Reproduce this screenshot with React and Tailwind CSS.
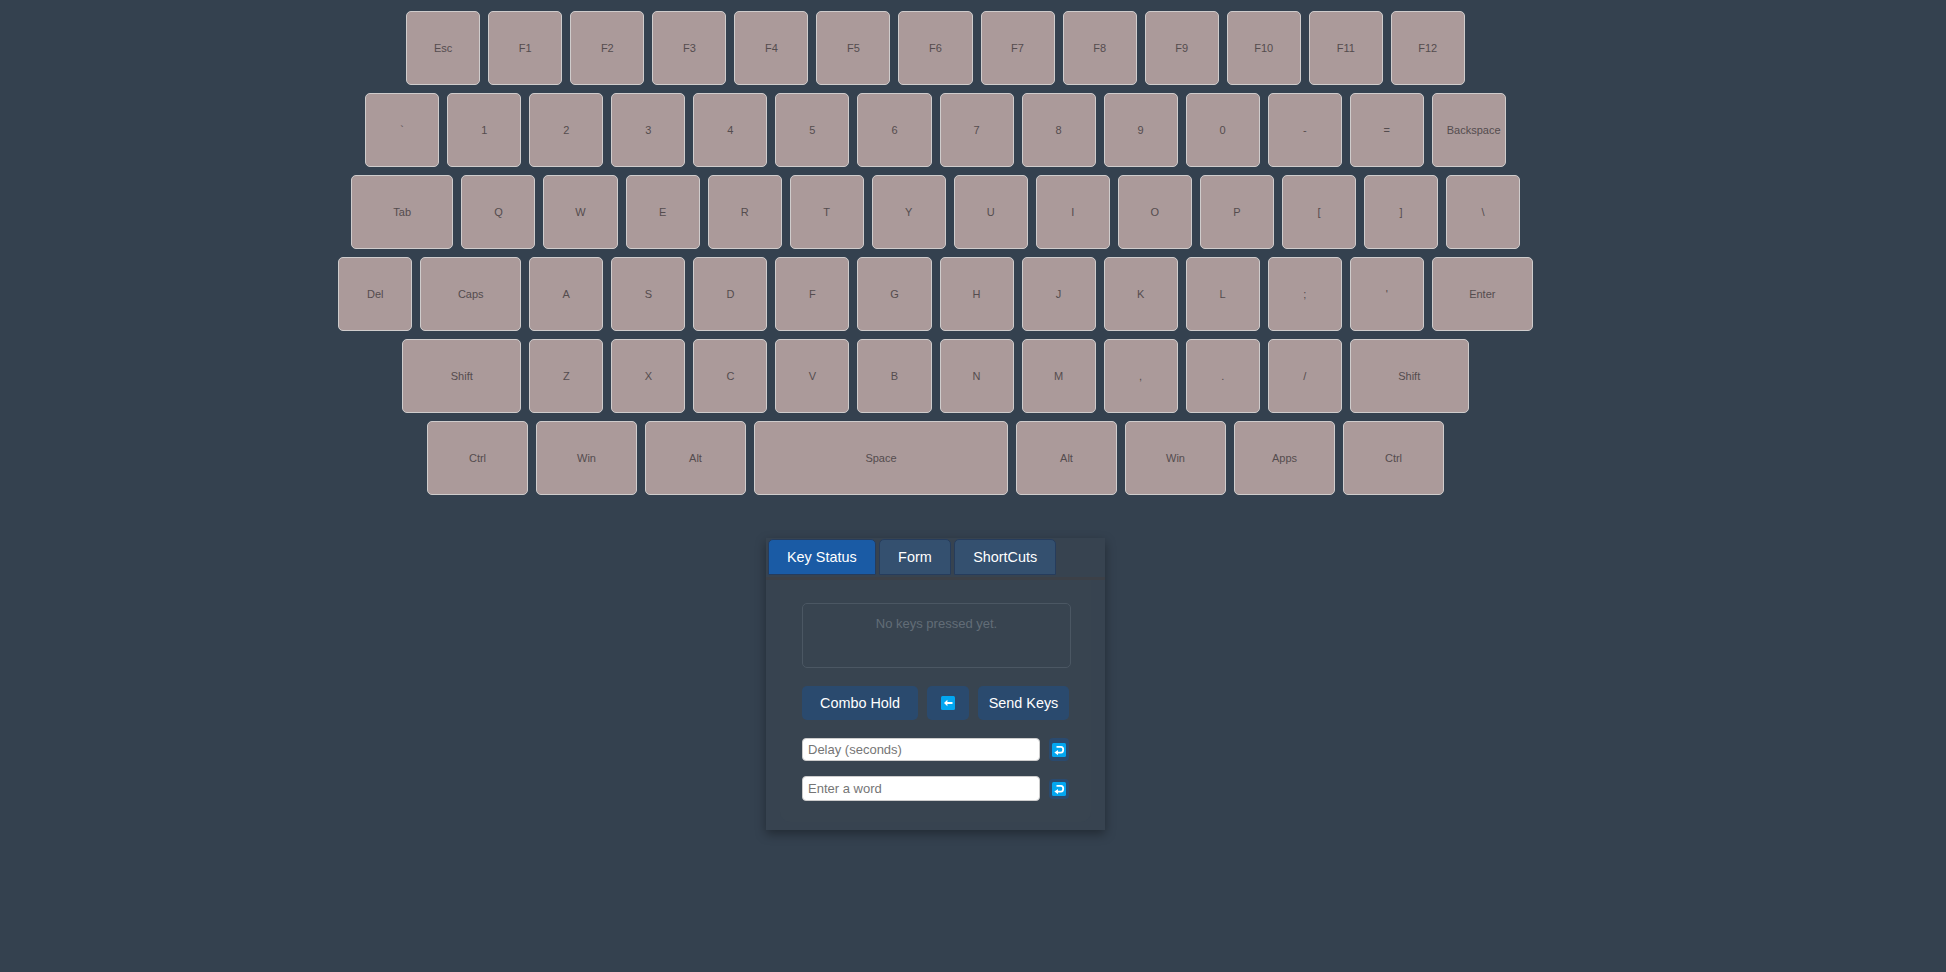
import { useState } from 'react';

// key sizes: s = normal, m = caps/enter/ctrl etc, t = tab, l = shift, x = space
const sizes = {
    s: 'w-[74.05px]',
    m: 'w-[101px]',
    t: 'w-[102.5px]',
    l: 'w-[119px]',
    x: 'w-[254px]',
};

const k = (list) => list.split(' ').map((label) => ({ label, size: 's' }));
const w = (label, size = 'm') => ({ label, size });

const rows = [
    k('Esc F1 F2 F3 F4 F5 F6 F7 F8 F9 F10 F11 F12'),
    k('` 1 2 3 4 5 6 7 8 9 0 - = Backspace'),
    [w('Tab', 't'), ...k('Q W E R T Y U I O P [ ] \\')],
    [w('Del', 's'), w('Caps'), ...k("A S D F G H J K L ; '"), w('Enter')],
    [w('Shift', 'l'), ...k('Z X C V B N M , . /'), w('Shift', 'l')],
    [w('Ctrl'), w('Win'), w('Alt'), w('Space', 'x'), w('Alt'), w('Win'), w('Apps'), w('Ctrl')],
];

function BackIcon() {
    return (
        <svg width="14" height="14" viewBox="0 0 14 14" className="block">
            <rect width="14" height="14" rx="1.5" fill="#03a6f0" />
            <path d="M3 7 L6.4 3.8 V6 H11.5 V8 H6.4 V10.2 Z" fill="#fff" />
        </svg>
    );
}

function ReturnIcon() {
    return (
        <svg width="14" height="14" viewBox="0 0 14 14" className="block">
            <rect width="14" height="14" rx="1.5" fill="#03a6f0" />
            <path d="M4.5 3.8 H9 Q11.2 3.8 11.2 6.5 Q11.2 9.6 9 9.6 H5.5" fill="none" stroke="#fff" strokeWidth="1.8" />
            <path d="M2.4 9.6 L6 6.9 V12.3 Z" fill="#fff" />
        </svg>
    );
}

function Keyboard() {
    return (
        <div className="flex flex-col gap-2 pt-[11px]">
            {rows.map((row, i) => (
                <div key={i} className="flex justify-center gap-2">
                    {row.map((key, j) => (
                        <button
                            key={j}
                            className={`${sizes[key.size]} h-[74px] shrink-0 px-[14px] text-center text-[11px] text-[#544c4e] bg-[#ab9a9a] border border-[#cfcccc] rounded-[5px]`}
                        >
                            {key.label}
                        </button>
                    ))}
                </div>
            ))}
        </div>
    );
}

function Panel() {
    const [tab, setTab] = useState('Key Status');

    return (
        <div className="w-[339px] h-[292px] mt-[43px] mx-auto bg-[#374350] shadow-[0_4px_10px_rgba(0,0,0,0.35)]">
            <div className="flex gap-[3.5px] pl-[2px] pt-[1px] h-[38px] border-b-[3px] border-[#3c4047] box-content">
                {['Key Status', 'Form', 'ShortCuts'].map((name) => (
                    <button
                        key={name}
                        onClick={() => setTab(name)}
                        className={`h-[36px] px-[18px] pt-[1px] text-[14.4px] text-white border border-[#263c5c] rounded-t-[5px] ${tab === name ? 'bg-[#1a5ba5]' : 'bg-[#34506f]'}`}
                    >
                        {name}
                    </button>
                ))}
            </div>
            <div className="mx-[14px] h-[242px] rounded-b-[10px] bg-[#384450] px-[22px] pt-[23px]">
                <div className="w-[269px] h-[65px] border border-[#4b5763] rounded-[5px] pt-[10px] text-center text-[13px] text-[#626d77]">
                    No keys pressed yet.
                </div>
                <div className="flex gap-[9px] mt-[18px]">
                    <button className="w-[116px] h-[34px] pt-[1px] text-[14.4px] text-white bg-[#2a4a6e] rounded-[5px]">Combo Hold</button>
                    <button className="w-[42px] h-[34px] flex items-center justify-center bg-[#2a4a6e] rounded-[5px]"><BackIcon /></button>
                    <button className="w-[91px] h-[34px] pt-[1px] text-[14.4px] text-white bg-[#2a4a6e] rounded-[5px]">Send Keys</button>
                </div>
                <div className="flex items-center gap-[9px] mt-[18px]">
                    <input placeholder="Delay (seconds)" className="w-[238px] h-[23px] px-[5px] text-[13px] text-black bg-white border border-[#ccc] rounded-[4px] outline-none placeholder:text-[#757575]" />
                    <button className="w-[20px] h-[23px] flex items-center justify-center bg-[#2a4a6e] rounded-[4px]"><ReturnIcon /></button>
                </div>
                <div className="flex items-center gap-[9px] mt-[15px]">
                    <input placeholder="Enter a word" className="w-[238px] h-[25px] px-[5px] text-[13px] text-black bg-white border border-[#ccc] rounded-[4px] outline-none placeholder:text-[#757575]" />
                    <button className="w-[20px] h-[20px] flex items-center justify-center bg-[#2a4a6e] rounded-[4px]"><ReturnIcon /></button>
                </div>
            </div>
        </div>
    );
}

export default function App() {
    return (
        <div className="min-h-[972px] bg-[#34414f] font-['Liberation_Sans',Arial,sans-serif]">
            <div className="w-[1871px]">
                <Keyboard />
                <Panel />
            </div>
        </div>
    );
}
